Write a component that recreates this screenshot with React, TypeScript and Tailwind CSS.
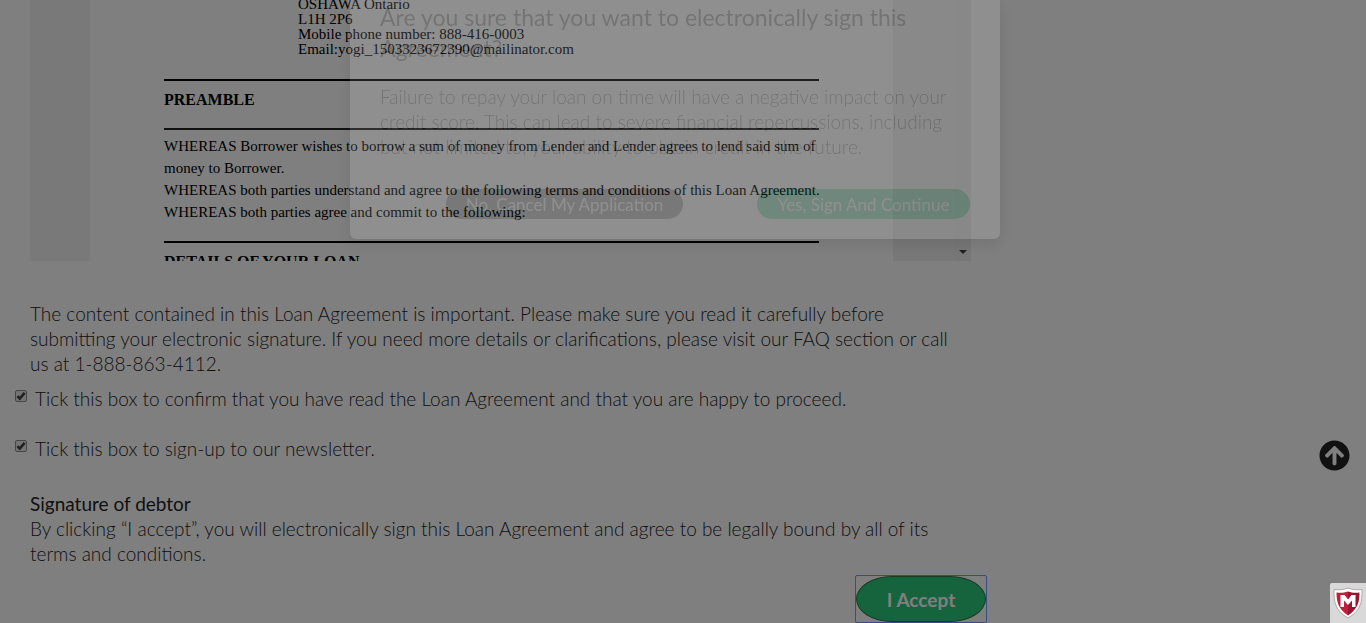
import { FaArrowCircleUp } from "react-icons/fa";

const CHECK = (
  <svg viewBox="0 0 12 12" className="pointer-events-none col-start-1 row-start-1 size-3" aria-hidden="true">
    <path d="M2.5 6.2 4.8 8.6 9.6 2.8" fill="none" stroke="#404040" strokeWidth="2.6" />
  </svg>
);

function Tick({ id, label }: { id: string; label: string }) {
  return (
    <div className="flex h-[25px] items-start gap-2">
      <span className="mt-1 grid size-3 shrink-0 place-items-center">
        <input
          id={id}
          type="checkbox"
          defaultChecked
          className="col-start-1 row-start-1 size-3 appearance-none rounded-xs border border-[#8c8c8c] bg-[#e8e8e8]"
        />
        {CHECK}
      </span>
      <label htmlFor={id}>{label}</label>
    </div>
  );
}

function AgreementDocument() {
  return (
    <div className="mx-4 flex h-[261px] overflow-hidden">
      <div className="w-[60px] shrink-0 bg-[#f2f2f2]" />
      <div className="min-w-0 flex-1 px-[74px] font-['Liberation_Serif',serif] text-[15px] text-black">
        <address className="-mt-[3px] ml-[134px] leading-[15px] not-italic">
          OSHAWA Ontario
          <br />
          L1H 2P6
          <br />
          Mobile phone number: 888-416-0003
          <br />
          Email:yogi_1503323672390@mailinator.com
        </address>
        <hr className="mt-[22px] border-t-2 border-black" />
        <h2 className="mt-[7px] text-base leading-6 font-bold">PREAMBLE</h2>
        <hr className="mt-4 border-t-2 border-[#222]" />
        <div className="-mr-4 mt-[5px] leading-[22px]">
          <p>WHEREAS Borrower wishes to borrow a sum of money from Lender and Lender agrees to lend said sum of money to Borrower.</p>
          <p>WHEREAS both parties understand and agree to the following terms and conditions of this Loan Agreement.</p>
          <p>WHEREAS both parties agree and commit to the following:</p>
        </div>
        <hr className="mt-[18px] border-t-2 border-black" />
        <h2 className="mt-[7px] text-base leading-6 font-bold">DETAILS OF YOUR LOAN</h2>
      </div>
      <div className="flex w-[78px] shrink-0 items-end justify-end bg-[#f1f1f1]">
        <div className="flex h-full w-[17px] items-end justify-center bg-[#eeeeee] pb-[7px]">
          <svg viewBox="0 0 8 4" className="h-1 w-2" aria-hidden="true">
            <path d="M0 0h8L4 4z" fill="#404040" />
          </svg>
        </div>
      </div>
    </div>
  );
}

function SignDialog() {
  return (
    <div className="fixed inset-x-0 top-0 flex justify-center pr-4">
      <div
        role="dialog"
        aria-labelledby="sign-title"
        className="w-[650px] rounded-b-md bg-white px-[30px] pb-5 text-[#222] opacity-12 shadow-[0_5px_15px_rgba(0,0,0,0.8)]"
      >
        <h2 id="sign-title" className="pt-0.5 text-[23px] leading-[31px]">
          Are you sure that you want to electronically sign this Agreement?
        </h2>
        <p className="mt-5 text-[19px] leading-[25px] font-light">
          Failure to repay your loan on time will have a negative impact on your credit score. This can lead to severe
          financial repercussions, including but not limited to, your ability to obtain credit in the future.
        </p>
        <div className="mt-[30px] flex justify-end gap-[74px]">
          <button type="button" className="h-[30px] w-[237px] rounded-full bg-[#444] text-[17px] text-white">
            No, Cancel My Application
          </button>
          <button type="button" className="h-[30px] w-[213px] rounded-full bg-[#00b868] text-[17px] text-white">
            Yes, Sign And Continue
          </button>
        </div>
      </div>
    </div>
  );
}

export default function App() {
  return (
    <div className="relative min-h-screen overflow-hidden bg-white font-[Lato,sans-serif] text-[19px] leading-[25px] text-[#222]">
      <main className="ml-[14px] w-[973px] max-w-full font-light">
        <AgreementDocument />
        <p className="mx-4 mt-10">
          The content contained in this Loan Agreement is important. Please make sure you read it carefully before
          submitting your electronic signature. If you need more details or clarifications, please visit our FAQ section
          or call us at 1-888-863-4112.
        </p>
        <div className="mt-[10px] ml-px flex flex-col gap-[25px]">
          <Tick id="confirm" label="Tick this box to confirm that you have read the Loan Agreement and that you are happy to proceed." />
          <Tick id="newsletter" label="Tick this box to sign-up to our newsletter." />
        </div>
        <div className="mx-4 mt-[30px]">
          <h3 className="font-normal">Signature of debtor</h3>
          <p>
            By clicking “I accept”, you will electronically sign this Loan Agreement and agree to be legally bound by all
            of its terms and conditions.
          </p>
        </div>
        <div className="mt-[9px] flex justify-end">
          <div className="rounded-xs border border-[#6a9aff]">
            <button
              type="button"
              className="block h-[46px] w-[130px] rounded-[36px/50%] border border-[#2a7a3a] bg-[#2ac87c] font-bold text-white"
            >
              I Accept
            </button>
          </div>
        </div>
      </main>
      <a href="#top" aria-label="Back to top" className="fixed right-4 bottom-[152px]">
        <FaArrowCircleUp className="size-[31px]" />
      </a>
      <div className="fixed inset-0 bg-black/50" />
      <SignDialog />
      <div className="fixed right-0 bottom-0 flex h-10 w-9 items-center justify-center rounded-tl-xs bg-[#d9d9d9]">
        <svg viewBox="0 0 30 32" className="h-8 w-[30px]" aria-hidden="true">
          <path d="M15 1C10 3 5 3 1 2.500c-.5 13.500 2 21.500 14 28.500C27 24 29.500 16 29 2.500 25 3 20 3 15 1z" fill="#fff" stroke="#aaa" strokeWidth="1" />
          <path d="M15 4.500C11 6 7 6 3.500 5.500 3.500 16 6 22.500 15 28.500z" fill="#c01f3c" />
          <path d="M15 4.500c4 1.500 8 1.500 11.500 1C26.500 16 24 22.500 15 28.500z" fill="#9c1430" />
          <path d="M7.500 20V8h4L15 12.500 18.500 8h4v12H19v-6.500L15 18l-4-4.500V20z" fill="#fff" />
        </svg>
      </div>
    </div>
  );
}
